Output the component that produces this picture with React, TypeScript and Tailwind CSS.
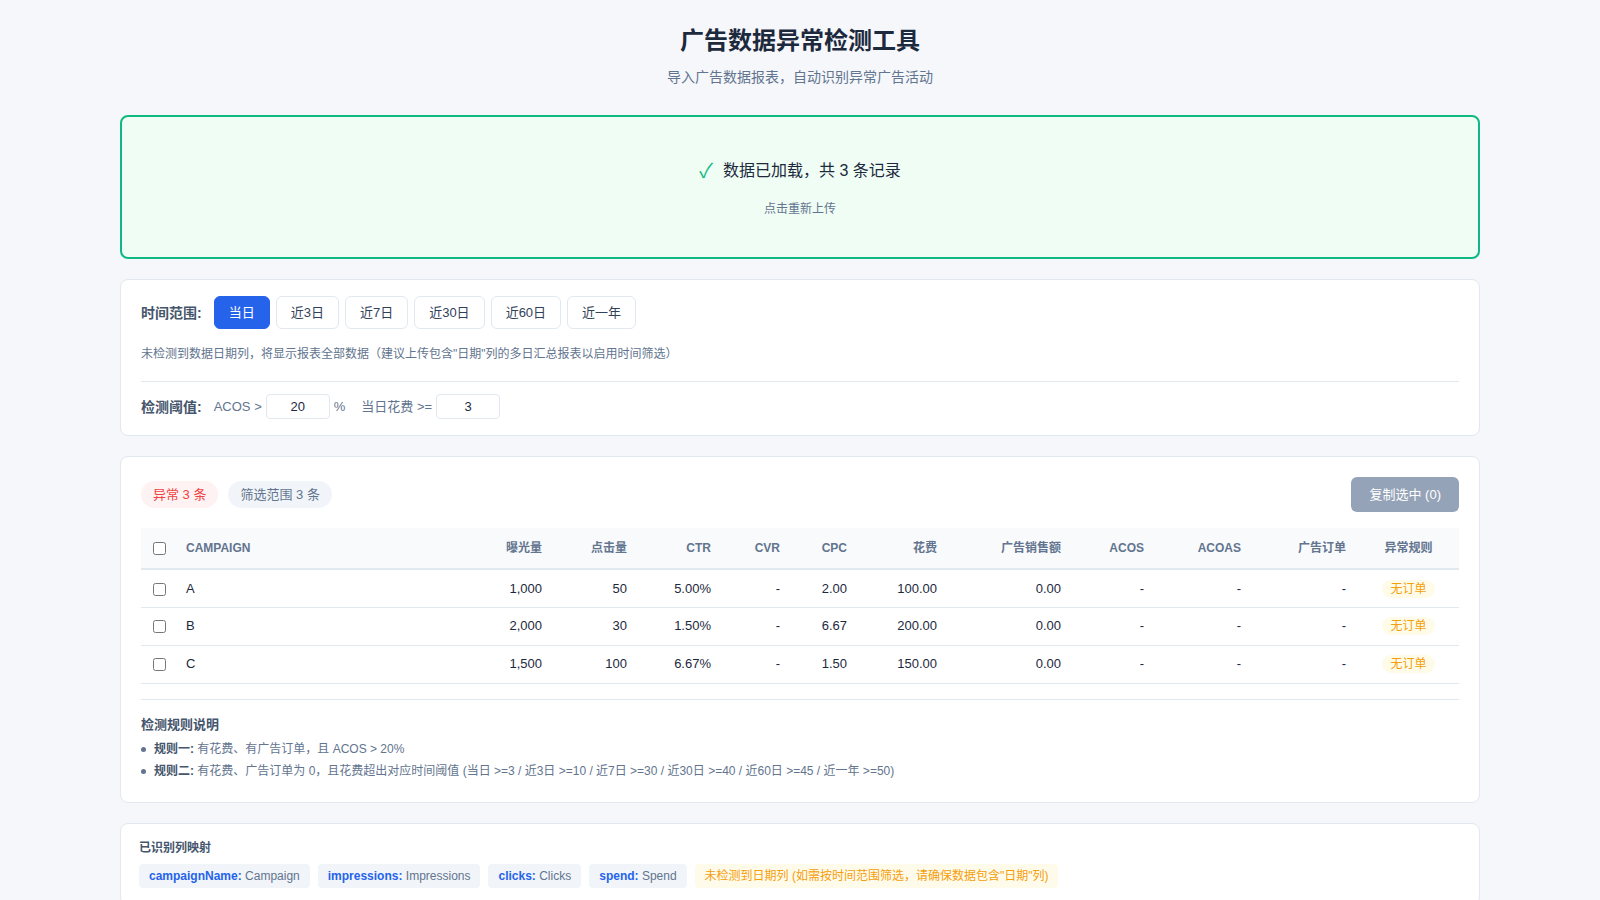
import { useState } from "react";

const rows = [
  { name: "A", imp: "1,000", clicks: "50", ctr: "5.00%", cvr: "-", cpc: "2.00", spend: "100.00", sales: "0.00", acos: "-", acoas: "-", orders: "-" },
  { name: "B", imp: "2,000", clicks: "30", ctr: "1.50%", cvr: "-", cpc: "6.67", spend: "200.00", sales: "0.00", acos: "-", acoas: "-", orders: "-" },
  { name: "C", imp: "1,500", clicks: "100", ctr: "6.67%", cvr: "-", cpc: "1.50", spend: "150.00", sales: "0.00", acos: "-", acoas: "-", orders: "-" },
];

const ranges = ["当日", "近3日", "近7日", "近30日", "近60日", "近一年"];

const mappings = [
  { key: "campaignName", value: "Campaign" },
  { key: "impressions", value: "Impressions" },
  { key: "clicks", value: "Clicks" },
  { key: "spend", value: "Spend" },
];

const headers = ["曝光量", "点击量", "CTR", "CVR", "CPC", "花费", "广告销售额", "ACOS", "ACOAS", "广告订单"];

export default function App() {
  const [range, setRange] = useState("当日");

  return (
    <div className="min-h-screen bg-[#f5f7fa] font-['Liberation_Sans','Noto_Sans_CJK_SC',sans-serif] text-slate-800">
      <div className="mx-auto max-w-[1400px] px-5 pt-[25px] pb-10">
        <header className="text-center">
          <h1 className="text-2xl font-bold text-slate-800">广告数据异常检测工具</h1>
          <p className="mt-2.5 text-sm text-slate-500">导入广告数据报表，自动识别异常广告活动</p>
        </header>

        {/* upload */}
        <div className="mt-7 flex h-[144px] cursor-pointer flex-col items-center justify-center rounded-lg border-2 border-[#10b981] bg-[#effdf4]">
          <div className="flex items-center gap-2.5 text-base text-slate-800">
            <span className="text-xl text-[#10b981]">✓</span>
            <span>数据已加载，共 3 条记录</span>
          </div>
          <p className="mt-4 text-xs text-slate-500">点击重新上传</p>
        </div>

        {/* filters */}
        <section className="mt-5 rounded-lg border border-slate-200 bg-white px-5 pt-4 pb-4">
          <div className="flex items-center gap-3">
            <span className="text-sm font-bold text-slate-600">时间范围:</span>
            <div className="flex gap-1.5">
              {ranges.map((r) => (
                <button
                  key={r}
                  onClick={() => setRange(r)}
                  className={
                    r === range
                      ? "h-[33px] rounded-md border border-[#2563eb] bg-[#2563eb] px-[14px] text-[13px] text-white"
                      : "h-[33px] rounded-md border border-slate-200 bg-white px-[14px] text-[13px] text-slate-700"
                  }
                >
                  {r}
                </button>
              ))}
            </div>
          </div>
          <p className="mt-[17px] text-xs text-slate-500">
            未检测到数据日期列，将显示报表全部数据（建议上传包含"日期"列的多日汇总报表以启用时间筛选）
          </p>
          <div className="mt-[19px] border-t border-slate-200 pt-3">
            <div className="flex items-center text-[13px] text-slate-500">
              <span className="mr-3 text-sm font-bold text-slate-600">检测阈值:</span>
              <span>ACOS &gt;</span>
              <input
                defaultValue="20"
                className="ml-1 h-[25px] w-[64px] rounded border border-slate-200 text-center text-[13px] text-slate-800 outline-none"
              />
              <span className="ml-1">%</span>
              <span className="ml-4">当日花费 &gt;=</span>
              <input
                defaultValue="3"
                className="ml-1 h-[25px] w-[64px] rounded border border-slate-200 text-center text-[13px] text-slate-800 outline-none"
              />
            </div>
          </div>
        </section>

        {/* results */}
        <section className="mt-5 rounded-lg border border-slate-200 bg-white px-5 pt-5 pb-5">
          <div className="flex items-center justify-between">
            <div className="flex items-center gap-2.5">
              <span className="flex h-[27px] items-center rounded-full bg-[#fef2f2] px-3 text-[13px] text-[#ef4444]">异常 3 条</span>
              <span className="flex h-[27px] items-center rounded-full bg-slate-100 px-3 text-[13px] text-slate-500">筛选范围 3 条</span>
            </div>
            <button className="h-[35px] rounded-md bg-[#94a3b8] px-[18px] text-[13px] text-white">复制选中 (0)</button>
          </div>

          <table className="mt-4 w-full table-fixed border-collapse text-[13px]">
            <colgroup>
              <col className="w-[33px]" />
              <col />
              <col className="w-[84px]" />
              <col className="w-[85px]" />
              <col className="w-[84px]" />
              <col className="w-[69px]" />
              <col className="w-[67px]" />
              <col className="w-[90px]" />
              <col className="w-[124px]" />
              <col className="w-[83px]" />
              <col className="w-[97px]" />
              <col className="w-[105px]" />
              <col className="w-[101px]" />
            </colgroup>
            <thead>
              <tr className="h-[41px] border-b-2 border-slate-200 bg-slate-50 text-xs font-bold text-slate-500">
                <th className="pl-3 text-left">
                  <input type="checkbox" className="h-[13px] w-[13px] align-middle" />
                </th>
                <th className="px-3 text-left">CAMPAIGN</th>
                {headers.map((h) => (
                  <th key={h} className="px-3 text-right">
                    {h}
                  </th>
                ))}
                <th className="px-3 text-center">异常规则</th>
              </tr>
            </thead>
            <tbody>
              {rows.map((r) => (
                <tr key={r.name} className="h-[38px] border-b border-slate-200 text-slate-800">
                  <td className="pl-3">
                    <input type="checkbox" className="h-[13px] w-[13px] align-middle" />
                  </td>
                  <td className="px-3">{r.name}</td>
                  <td className="px-3 text-right">{r.imp}</td>
                  <td className="px-3 text-right">{r.clicks}</td>
                  <td className="px-3 text-right">{r.ctr}</td>
                  <td className="px-3 text-right">{r.cvr}</td>
                  <td className="px-3 text-right">{r.cpc}</td>
                  <td className="px-3 text-right">{r.spend}</td>
                  <td className="px-3 text-right">{r.sales}</td>
                  <td className="px-3 text-right">{r.acos}</td>
                  <td className="px-3 text-right">{r.acoas}</td>
                  <td className="px-3 text-right">{r.orders}</td>
                  <td className="px-3 text-center">
                    <span className="rounded-full bg-[#fefce8] px-2 py-0.5 text-xs text-[#f59e0b]">无订单</span>
                  </td>
                </tr>
              ))}
            </tbody>
          </table>

          <div className="mt-[15px] border-t border-slate-200 pt-[15px]">
            <h3 className="text-[13px] font-bold text-slate-600">检测规则说明</h3>
            <ul className="mt-1 text-xs leading-[22px] text-slate-500">
              <li className="flex items-center gap-2">
                <span className="h-[5px] w-[5px] rounded-full bg-slate-500" />
                <span>
                  <b className="text-slate-600">规则一:</b> 有花费、有广告订单，且 ACOS &gt; 20%
                </span>
              </li>
              <li className="flex items-center gap-2">
                <span className="h-[5px] w-[5px] rounded-full bg-slate-500" />
                <span>
                  <b className="text-slate-600">规则二:</b> 有花费、广告订单为 0，且花费超出对应时间阈值 (当日 &gt;=3 / 近3日 &gt;=10 / 近7日 &gt;=30 / 近30日 &gt;=40 / 近60日 &gt;=45 / 近一年 &gt;=50)
                </span>
              </li>
            </ul>
          </div>
        </section>

        {/* mapping */}
        <section className="mt-5 rounded-lg border border-slate-200 bg-white px-[18px] pt-4 pb-4">
          <h4 className="text-xs font-semibold text-slate-600">已识别列映射</h4>
          <div className="mt-2 flex flex-wrap gap-2">
            {mappings.map((m) => (
              <span key={m.key} className="rounded bg-slate-100 px-2.5 py-1 text-xs text-slate-500">
                <b className="text-[#2563eb]">{m.key}:</b> {m.value}
              </span>
            ))}
            <span className="rounded bg-[#fffbeb] px-2.5 py-1 text-xs text-[#f59e0b]">
              未检测到日期列 (如需按时间范围筛选，请确保数据包含"日期"列)
            </span>
          </div>
        </section>
      </div>
    </div>
  );
}
